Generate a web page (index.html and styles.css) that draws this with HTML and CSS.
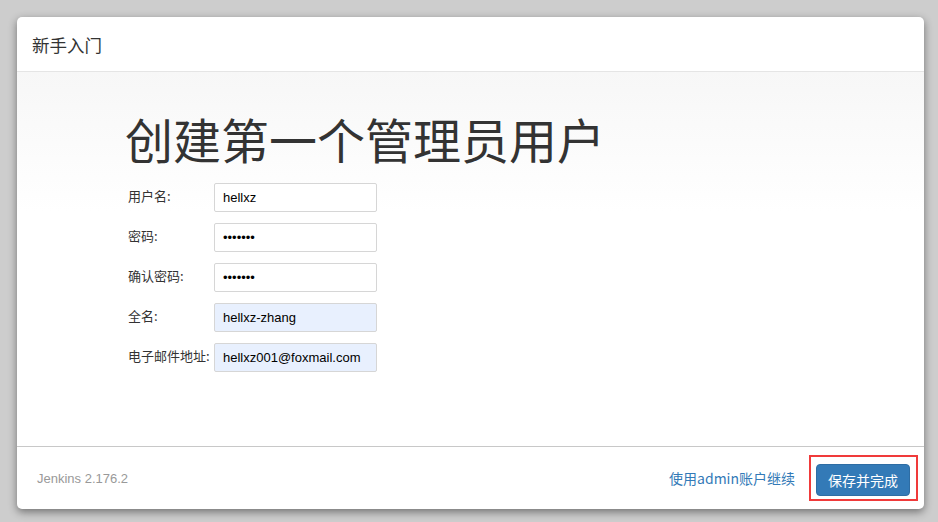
FILE: index.html
```html
<!DOCTYPE html>
<html lang="zh-CN">
<head>
    <meta charset="UTF-8">
    <title>新手入门</title>
    <link rel="stylesheet" href="styles.css">
</head>
<body>
    <div class="dialog">
        <div class="dialog-header">新手入门</div>
        <div class="dialog-body">
            <h1>创建第一个管理员用户</h1>
            <div class="form">
                <div class="row">
                    <label>用户名:</label>
                    <input class="field" type="text" value="hellxz">
                </div>
                <div class="row">
                    <label>密码:</label>
                    <input class="field" type="password" value="1234567">
                </div>
                <div class="row">
                    <label>确认密码:</label>
                    <input class="field" type="password" value="1234567">
                </div>
                <div class="row">
                    <label>全名:</label>
                    <input class="field filled" type="text" value="hellxz-zhang">
                </div>
                <div class="row">
                    <label>电子邮件地址:</label>
                    <input class="field filled" type="text" value="hellxz001@foxmail.com">
                </div>
            </div>
        </div>
        <div class="dialog-footer">
            <span class="version">Jenkins 2.176.2</span>
            <a class="skip" href="#">使用admin账户继续</a>
            <span class="mark"><button class="save">保存并完成</button></span>
        </div>
    </div>
</body>
</html>
```

FILE: styles.css
```css
* {
    box-sizing: border-box;
}

body {
    margin: 0;
    padding: 17px 14px 13px 17px;
    height: 522px;
    background-color: #cdcdcd;
    font-family: "Liberation Sans", "Noto Sans CJK SC", sans-serif;
    overflow: hidden;
}

.dialog {
    display: flex;
    flex-direction: column;
    height: 492px;
    background-color: #fff;
    border-radius: 5px;
    box-shadow: 0 3px 8px rgba(0, 0, 0, 0.45);
}

.dialog-header {
    height: 55px;
    padding: 0 15px;
    display: flex;
    align-items: center;
    border-bottom: 1px solid #e5e5e5;
    font-family: "Noto Sans CJK SC", sans-serif;
    font-size: 17.5px;
    color: #333;
}

.dialog-body {
    flex: 1;
    padding: 34px 0 0 108px;
    background: linear-gradient(#f7f7f7, #fff 140px);
    border-bottom: 1px solid #c8c8c8;
}

h1 {
    margin: 0 0 13px;
    font-family: "Noto Sans CJK SC", sans-serif;
    font-weight: normal;
    font-size: 48px;
    line-height: 64px;
    color: #333;
}

.form {
    display: flex;
    flex-direction: column;
    gap: 11px;
    padding-left: 3px;
}

.row {
    display: flex;
    align-items: flex-start;
}

.row label {
    width: 86px;
    padding-top: 3px;
    font-family: "Noto Sans CJK SC", sans-serif;
    font-size: 13px;
    color: #333;
    white-space: nowrap;
}

.field {
    width: 163px;
    height: 29px;
    margin: 0;
    padding: 0 8px;
    border: 1px solid #d6d6d6;
    border-radius: 2px;
    background-color: #fff;
    font-family: "Liberation Sans", sans-serif;
    font-size: 13px;
    color: #000;
    outline: none;
}

.field.filled {
    background-color: #e8f0fe;
}

.dialog-footer {
    height: 62px;
    display: flex;
    align-items: center;
    padding: 0 6px 0 20px;
}

.version {
    flex: 1;
    font-size: 13px;
    color: #999;
}

.skip {
    margin-right: 14px;
    font-family: "Noto Sans CJK SC", sans-serif;
    font-size: 14px;
    color: #337ab7;
    text-decoration: none;
}

.mark {
    display: block;
    padding: 7px 6px 3px 5px;
    border: 2px solid #f03a3a;
}

.save {
    display: block;
    width: 94px;
    height: 32px;
    border: 1px solid #2e6da4;
    border-radius: 4px;
    background-color: #337ab7;
    color: #fff;
    font-family: "Noto Sans CJK SC", sans-serif;
    font-size: 14px;
}
```
